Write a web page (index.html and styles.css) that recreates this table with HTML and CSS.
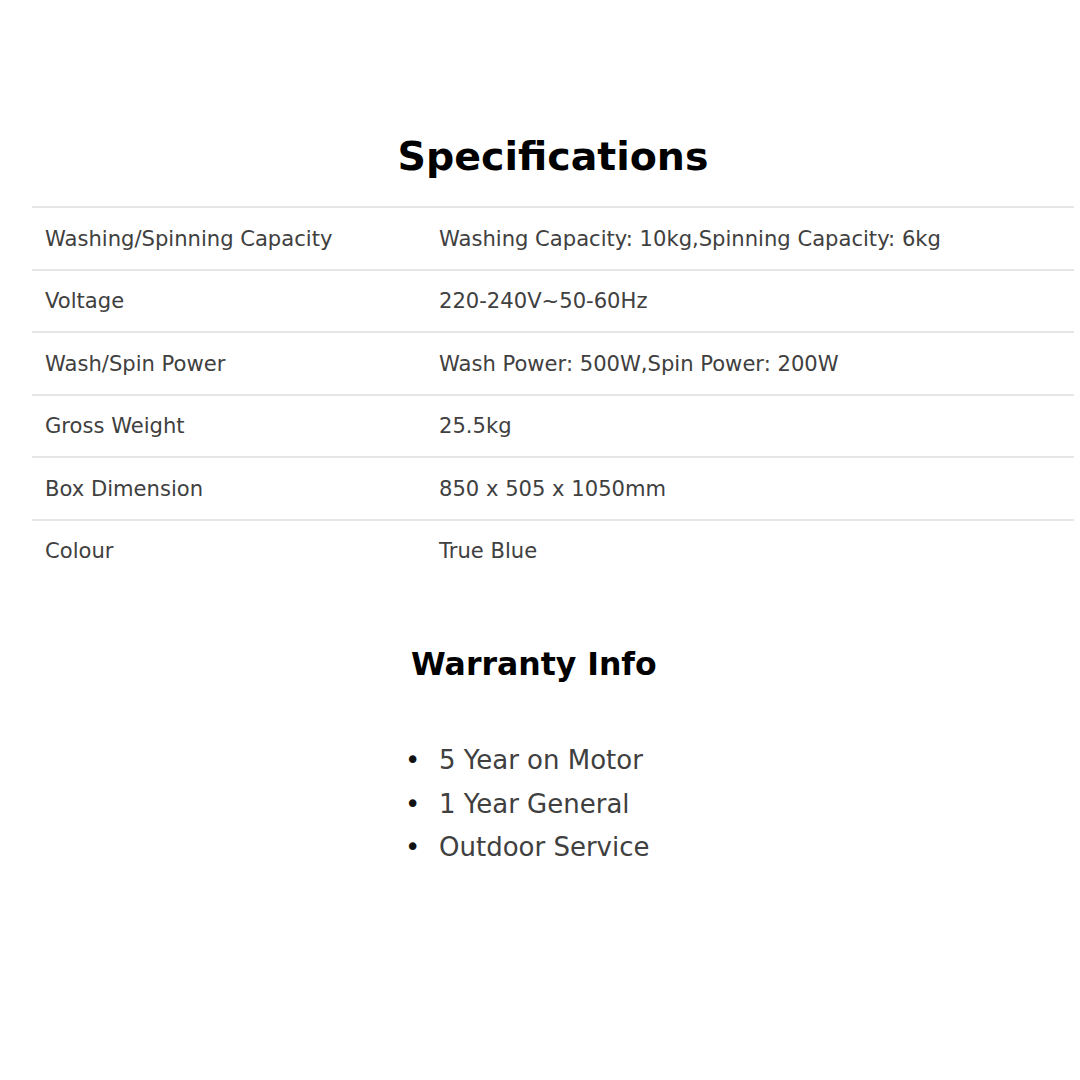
FILE: index.html
```html
<!DOCTYPE html>
<html lang="en">
<head>
<meta charset="utf-8">
<title>Specifications</title>
<link rel="stylesheet" href="styles.css">
</head>
<body>
<main class="page">
  <section class="specs">
    <h2 class="title">Specifications</h2>
    <table class="spec-table">
      <tbody>
        <tr><td class="key">Washing/Spinning Capacity</td><td class="val">Washing Capacity: 10kg,Spinning Capacity: 6kg</td></tr>
        <tr><td class="key">Voltage</td><td class="val">220-240V~50-60Hz</td></tr>
        <tr><td class="key">Wash/Spin Power</td><td class="val">Wash Power: 500W,Spin Power: 200W</td></tr>
        <tr><td class="key">Gross Weight</td><td class="val">25.5kg</td></tr>
        <tr><td class="key">Box Dimension</td><td class="val">850 x 505 x 1050mm</td></tr>
        <tr><td class="key">Colour</td><td class="val">True Blue</td></tr>
      </tbody>
    </table>
  </section>
  <section class="warranty">
    <h2 class="subtitle">Warranty Info</h2>
    <ul class="w-list">
      <li>5 Year on Motor</li>
      <li>1 Year General</li>
      <li>Outdoor Service</li>
    </ul>
  </section>
</main>
</body>
</html>
```

FILE: styles.css
```css
html, body {
  margin: 0;
  padding: 0;
  background: #ffffff;
}
body {
  font-family: "DejaVu Sans", "Liberation Sans", sans-serif;
  color: #404040;
}
.page {
  padding: 130px 6px 0 32px;
}
.title {
  margin: 0 0 24px 0;
  text-align: center;
  font-size: 39.5px;
  line-height: 52px;
  font-weight: bold;
  color: #000;
}
.spec-table {
  width: 100%;
  border-collapse: collapse;
}
.spec-table tr {
  border-top: 2px solid #e6e6e6;
}
.spec-table td {
  height: 60.5px;
  padding: 0 0 0 13px;
  font-size: 21.1px;
  vertical-align: middle;
}
.spec-table td.key {
  width: 381px;
}
.warranty {
  padding: 61px 0 0 379px;
}
.subtitle {
  margin: 0;
  font-size: 31.5px;
  line-height: 44px;
  font-weight: bold;
  color: #000;
}
.w-list {
  list-style: none;
  margin: 53px 0 0 -6px;
  padding: 0;
  font-size: 26px;
  line-height: 43.5px;
}
.w-list li::before {
  content: "\2022";
  display: inline-block;
  width: 34px;
  color: #111;
}
```
